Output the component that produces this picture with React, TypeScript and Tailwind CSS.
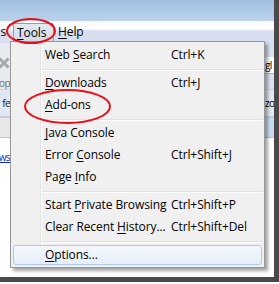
import type { ReactNode } from 'react';

type MenuEntry =
  | { kind: 'sep' }
  | { kind: 'item'; text: string; accel: number; shortcut?: string; active?: boolean };

const entries: MenuEntry[] = [
  { kind: 'item', text: 'Web Search', accel: 4, shortcut: 'Ctrl+K' },
  { kind: 'sep' },
  { kind: 'item', text: 'Downloads', accel: 0, shortcut: 'Ctrl+J' },
  { kind: 'item', text: 'Add-ons', accel: 0 },
  { kind: 'sep' },
  { kind: 'item', text: 'Java Console', accel: 0 },
  { kind: 'item', text: 'Error Console', accel: 6, shortcut: 'Ctrl+Shift+J' },
  { kind: 'item', text: 'Page Info', accel: 5 },
  { kind: 'sep' },
  { kind: 'item', text: 'Start Private Browsing', accel: 6, shortcut: 'Ctrl+Shift+P' },
  { kind: 'item', text: 'Clear Recent History...', accel: 13, shortcut: 'Ctrl+Shift+Del' },
  { kind: 'sep' },
  { kind: 'item', text: 'Options...', accel: 0, active: true },
];

function Accel({ text, at }: { text: string; at: number }): ReactNode {
  return (
    <>
      {text.slice(0, at)}
      <span className="underline underline-offset-2">{text[at]}</span>
      {text.slice(at + 1)}
    </>
  );
}

function ToolsMenu() {
  return (
    <div className="absolute left-[10px] top-[41px] w-[255px] border border-[#979797] pt-[2px] pb-px shadow-[3px_3px_3px_rgba(0,0,0,0.35)] bg-[linear-gradient(to_right,#f0f0f0_29px,#e2e3e3_29px,#e2e3e3_30px,#ffffff_30px,#ffffff_31px,#f0f0f0_31px)]">
      {entries.map((e, i) =>
        e.kind === 'sep' ? (
          <div key={i} className="h-[6px] pt-[3px] pl-[31px] pr-px">
            <div className="h-px bg-[#e0e0e0]" />
            <div className="h-px bg-white" />
          </div>
        ) : (
          <div key={i} className="h-[22px] py-px px-[2px]">
            <div
              className={
                'flex h-[20px] items-center rounded-[3px] border ' +
                (e.active
                  ? 'border-[#aecbee] bg-[linear-gradient(#f4f8fd,#e6eef9)]'
                  : 'border-transparent')
              }
            >
              <span className="w-[157px] shrink-0 pl-[31px] whitespace-nowrap">
                <Accel text={e.text} at={e.accel} />
              </span>
              {e.shortcut && <span className="whitespace-nowrap">{e.shortcut}</span>}
            </div>
          </div>
        )
      )}
    </div>
  );
}

function Edge({ children, className }: { children: ReactNode; className?: string }) {
  return (
    <div className={'flex w-[10px] shrink-0 justify-end text-[10px] tracking-[-0.6px] ' + (className ?? '')}>
      {children}
    </div>
  );
}

export default function App() {
  return (
    <div className="w-[279px] h-[284px] bg-white font-['Open_Sans','Noto_Sans',sans-serif] text-[12px] tracking-[-0.1px] text-black">
      <div className="w-[279px] h-[282px] border-r-[5px] border-b-[5px] border-[#4a4a4a]">
        <div className="relative flex h-[277px] w-[274px] flex-col overflow-hidden bg-white">
          {/* title bar */}
          <div className="h-[21px] shrink-0 bg-[linear-gradient(#9fbfe0,#bcd3eb)]" />

          {/* menu bar */}
          <div className="flex h-[22px] shrink-0 items-start bg-[linear-gradient(#f7f9fc_0%,#ffffff_35%,#d8e0f0_45%,#d6deef_100%)]">
            <div className="flex w-[6px] shrink-0 justify-end pt-[2px] leading-[18px]">
              <span className="whitespace-nowrap">s</span>
            </div>
            <div className="ml-[7px] mt-[2px] h-[19px] w-[41px] rounded-[2px] border border-[#8d9db3] bg-[linear-gradient(#e4e9f1,#d3dbe8)] pl-[3px] leading-[17px]">
              <Accel text="Tools" at={0} />
            </div>
            <div className="ml-[4px] pt-[2px] leading-[18px]">
              <Accel text="Help" at={0} />
            </div>
          </div>

          {/* navigation toolbar */}
          <div className="flex h-[46px] shrink-0 justify-between bg-[#d9e0f0]">
            <Edge className="flex-col items-end bg-[#e7eaef]">
              <div className="flex h-[30px] w-[12px] shrink-0 items-center justify-center self-end pt-[2px]">
                <svg width="12" height="12" viewBox="0 0 12 12">
                  <path d="M1.5 1.5 10.5 10.5M10.5 1.5 1.5 10.5" stroke="#a3a6ab" strokeWidth="3" />
                </svg>
              </div>
              <span className="whitespace-nowrap leading-[12px] text-[#6e6e6e]">op</span>
            </Edge>
            <div className="flex w-[9px] shrink-0 flex-col">
              <div className="h-[14px]" />
              <div className="flex h-[17px] items-center border-b border-[#a9b6cb] bg-white text-[10px] tracking-[-0.6px]">
                <span className="whitespace-nowrap leading-[14px]">gl</span>
              </div>
            </div>
          </div>

          {/* bookmarks toolbar */}
          <div className="flex h-[29px] shrink-0 items-center justify-between border-t border-[#c9d2e3] border-b-[2px] border-b-[#c3cde0] bg-[#e1e7f3]">
            <Edge>
              <span className="whitespace-nowrap text-[#222]">fe</span>
            </Edge>
            <div className="w-[9px] shrink-0 text-[10px] tracking-[-0.6px]">
              <span className="whitespace-nowrap">zo</span>
            </div>
          </div>

          {/* tab strip */}
          <div className="flex h-[20px] shrink-0 justify-between border-b border-[#b9c3d4] bg-[#e8e8e8]">
            <div className="w-[10px]" />
            <div className="w-[9px] bg-[#cadbf0]" />
          </div>

          {/* page content */}
          <div className="flex flex-1 flex-col pt-[12px]">
            <Edge>
              <span className="whitespace-nowrap text-[#0033cc] underline">ws</span>
            </Edge>
          </div>

          <ToolsMenu />

          <svg className="pointer-events-none absolute left-0 top-0" width="274" height="277">
            <ellipse cx="31" cy="31" rx="24" ry="12" fill="none" stroke="#e8101a" strokeWidth="2" />
            <ellipse cx="67.5" cy="106.5" rx="42.5" ry="16.5" fill="none" stroke="#e8101a" strokeWidth="2" />
          </svg>
        </div>
      </div>
    </div>
  );
}
